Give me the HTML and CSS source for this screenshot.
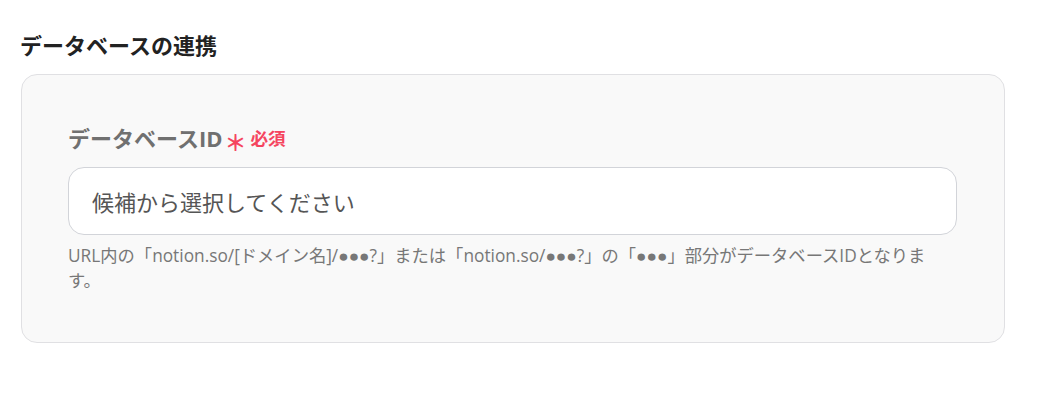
FILE: index.html
```html
<!DOCTYPE html>
<html lang="ja">
<head>
<meta charset="utf-8">
<link rel="stylesheet" href="styles.css">
</head>
<body>
<section class="page">
  <h2 class="title">データベースの連携</h2>
  <div class="card">
    <div class="label-row">
      <span class="label">データベースID</span>
      <span class="asterisk">＊</span>
      <span class="required">必須</span>
    </div>
    <div class="input">候補から選択してください</div>
    <p class="help">URL内の「notion.so/[ドメイン名]/<span class="dots">●●●</span>?」または「notion.so/<span class="dots">●●●</span>?」の「<span class="dots">●●●</span>」部分がデータベースIDとなります。</p>
  </div>
</section>
</body>
</html>
```

FILE: styles.css
```css
* { box-sizing: border-box; }
html, body { margin: 0; padding: 0; background: #fff; }
body {
  font-family: "Open Sans", "Noto Sans CJK JP", sans-serif;
}
.page {
  padding: 33px 0 0 20px;
  width: 1005px;
}
.title {
  margin: 0 0 17px 0;
  font-size: 22px;
  line-height: 24px;
  font-weight: 700;
  color: #222;
}
.card {
  margin-left: 1px;
  background: #f9f9f9;
  border: 1px solid #e0e0e3;
  border-radius: 16px;
  padding: 46px 47px 49px 46px;
}
.label-row {
  display: flex;
  align-items: center;
  height: 32px;
  margin-bottom: 14px;
}
.label {
  font-size: 22px;
  font-weight: 700;
  color: #707070;
}
.asterisk {
  color: #f5455f;
  font-size: 22px;
  font-weight: 700;
  margin-left: 2px;
  margin-top: 8px;
}
.required {
  color: #f5455f;
  font-size: 17.6px;
  font-weight: 700;
  margin-left: 4px;
}
.input {
  height: 68px;
  background: #fff;
  border: 1px solid #d2d4d9;
  border-radius: 16px;
  padding: 0 23px;
  display: flex;
  align-items: center;
  font-size: 22px;
  color: #555;
}
.help {
  margin: 8px 0 0 0;
  font-size: 17.3px;
  line-height: 25px;
  color: #777;
}
.dots {
  display: inline-block;
  font-family: "Liberation Sans", sans-serif;
  line-height: 1;
}
```
